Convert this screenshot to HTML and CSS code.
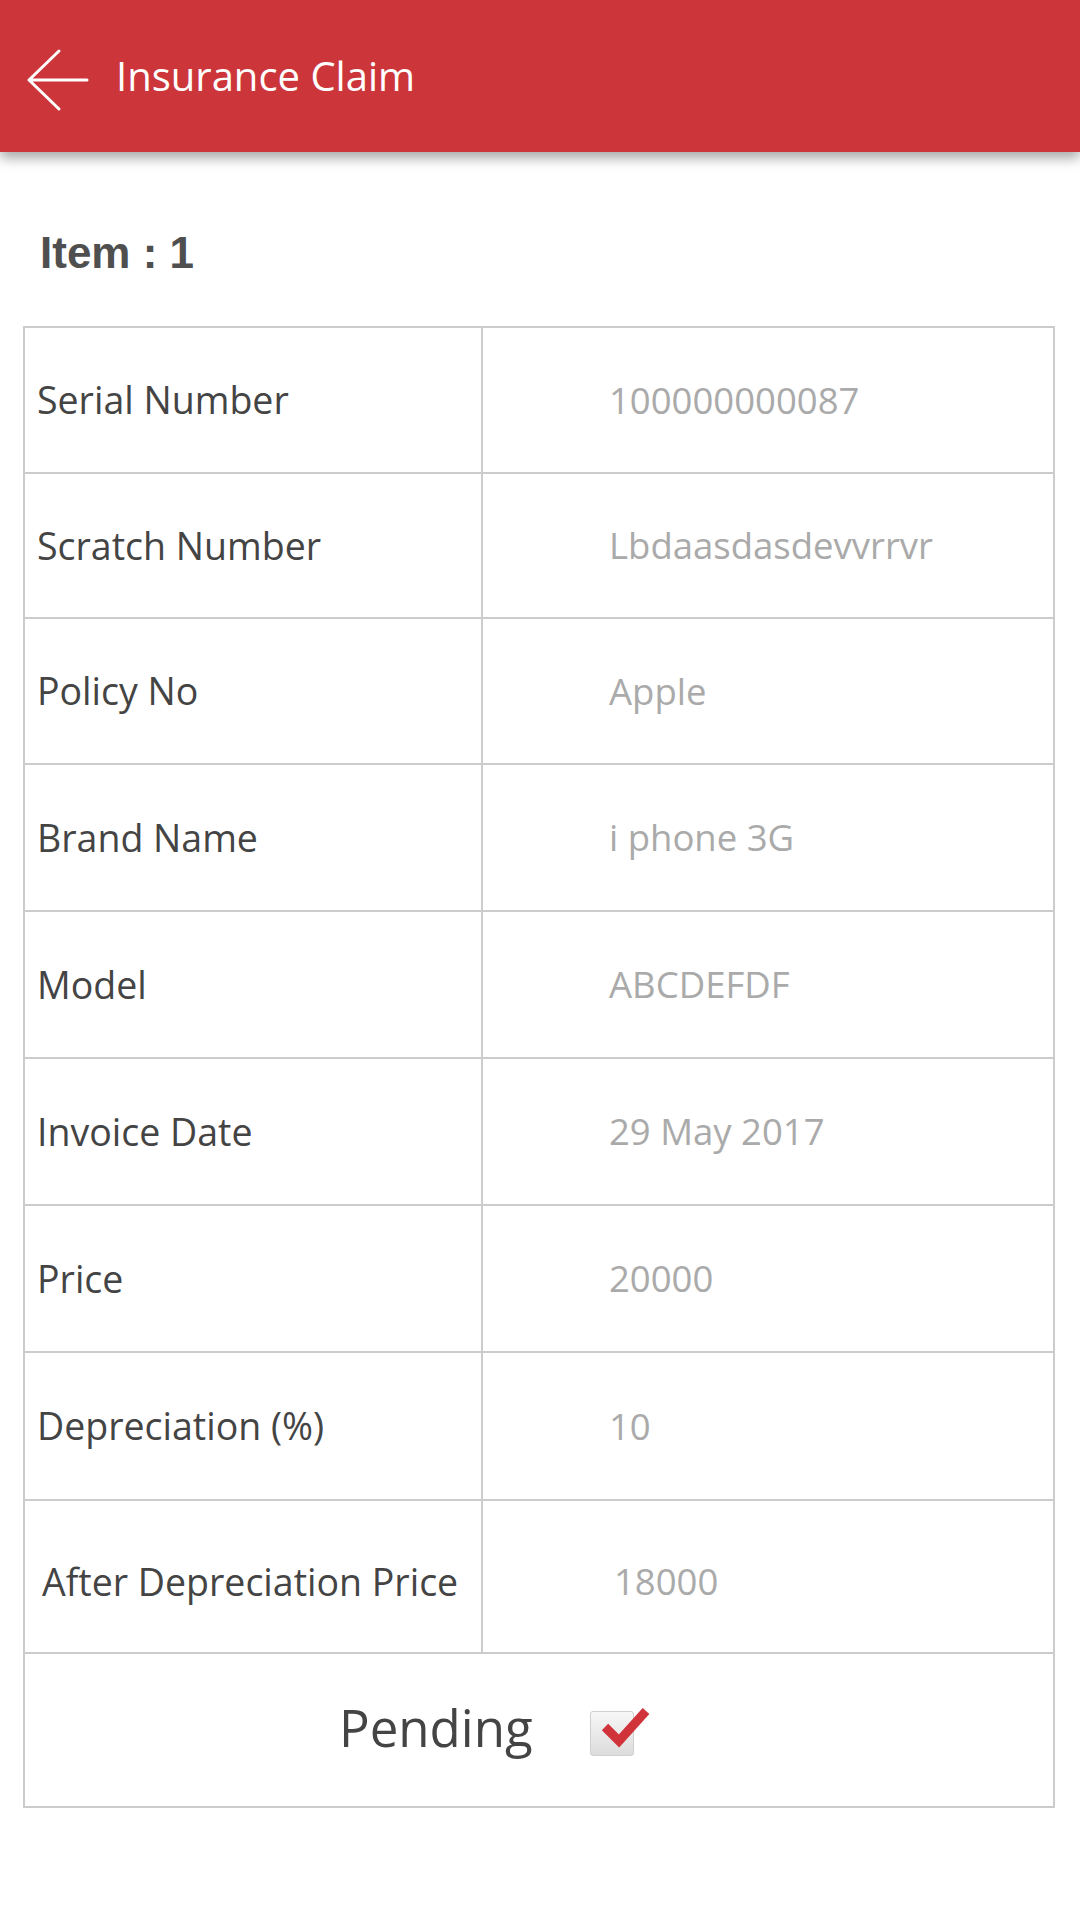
FILE: index.html
```html
<!DOCTYPE html>
<html>
<head>
<meta charset="utf-8">
<link rel="stylesheet" href="styles.css">
</head>
<body>
<header class="appbar">
  <svg class="back" width="64" height="64" viewBox="0 0 64 64">
    <path d="M61 32 H3 M33 3 L3 32 L33 61" fill="none" stroke="#fff" stroke-width="3" stroke-linecap="round" stroke-linejoin="round"/>
  </svg>
  <h1 class="title">Insurance Claim</h1>
</header>
<main class="content">
  <h2 class="item-label">Item : 1</h2>
  <div class="table">
    <div class="row"><div class="key">Serial Number</div><div class="val">100000000087</div></div>
    <div class="row"><div class="key">Scratch Number</div><div class="val">Lbdaasdasdevvrrvr</div></div>
    <div class="row"><div class="key">Policy No</div><div class="val">Apple</div></div>
    <div class="row"><div class="key">Brand Name</div><div class="val">i phone 3G</div></div>
    <div class="row"><div class="key">Model</div><div class="val">ABCDEFDF</div></div>
    <div class="row"><div class="key">Invoice Date</div><div class="val">29 May 2017</div></div>
    <div class="row"><div class="key">Price</div><div class="val">20000</div></div>
    <div class="row"><div class="key">Depreciation (%)</div><div class="val">10</div></div>
    <div class="row row-tall"><div class="key key-shift">After Depreciation Price</div><div class="val val-shift">18000</div></div>
    <div class="row-status">
      <span class="status-text">Pending</span>
      <span class="checkbox">
        <svg class="tick" width="52" height="44" viewBox="0 0 52 44">
          <path d="M6 21 L20 35 L47 5" fill="none" stroke="#d0333a" stroke-width="9" stroke-linejoin="miter"/>
        </svg>
      </span>
    </div>
  </div>
</main>
</body>
</html>
```

FILE: styles.css
```css
* { box-sizing: border-box; }

html, body {
  margin: 0;
  padding: 0;
  background: #ffffff;
  width: 1080px;
  height: 1920px;
  font-family: "Open Sans", "Noto Sans", sans-serif;
}

.appbar {
  height: 152px;
  background: #cc363b;
  display: flex;
  align-items: center;
  padding-left: 26px;
  box-shadow: 0 6px 12px rgba(0, 0, 0, 0.35);
  position: relative;
  z-index: 2;
}

.back {
  display: block;
  margin-top: 8px;
  flex: none;
}

.title {
  margin: 0 0 0 26px;
  color: #ffffff;
  font-size: 40px;
  font-weight: 400;
  line-height: 1;
}

.content {
  padding: 0;
}

.item-label {
  margin: 0;
  padding: 78px 0 0 40px;
  height: 174px;
  font-family: "Liberation Sans", Arial, sans-serif;
  font-weight: 700;
  font-size: 44px;
  line-height: 46px;
  color: #4f4f4f;
}

.table {
  margin-left: 23px;
  width: 1032px;
  border: 2px solid #cccccc;
}

.row {
  display: grid;
  grid-template-columns: 458px 1fr;
  height: 147px;
  border-bottom: 2px solid #cccccc;
}

.row:nth-child(-n+3) {
  height: 145.5px;
}

.row:nth-child(8) {
  height: 148px;
}

.row.row-tall {
  height: 153px;
}

.key {
  border-right: 2px solid #cccccc;
  display: flex;
  align-items: center;
  padding-left: 12px;
  font-size: 37.5px;
  font-weight: 400;
  color: #444444;
}

.val {
  display: flex;
  align-items: center;
  padding-left: 126px;
  font-size: 36.5px;
  color: #aaaaaa;
}

.key-shift { padding-left: 17px; padding-top: 10px; }
.val-shift { padding-left: 131px; padding-top: 10px; }

.row-status {
  height: 152px;
  display: flex;
  align-items: center;
  padding-left: 314px;
}

.status-text {
  font-size: 51px;
  font-weight: 400;
  color: #444444;
  line-height: 1;
  margin-top: -4px;
}

.checkbox {
  position: relative;
  margin-left: 57px;
  width: 44px;
  height: 45px;
  border: 1px solid #cfcfcf;
  border-radius: 3px;
  background: linear-gradient(#f7f7f7, #dcdcdc);
  margin-top: 8px;
}

.tick {
  position: absolute;
  left: 8px;
  top: -6px;
}
```
